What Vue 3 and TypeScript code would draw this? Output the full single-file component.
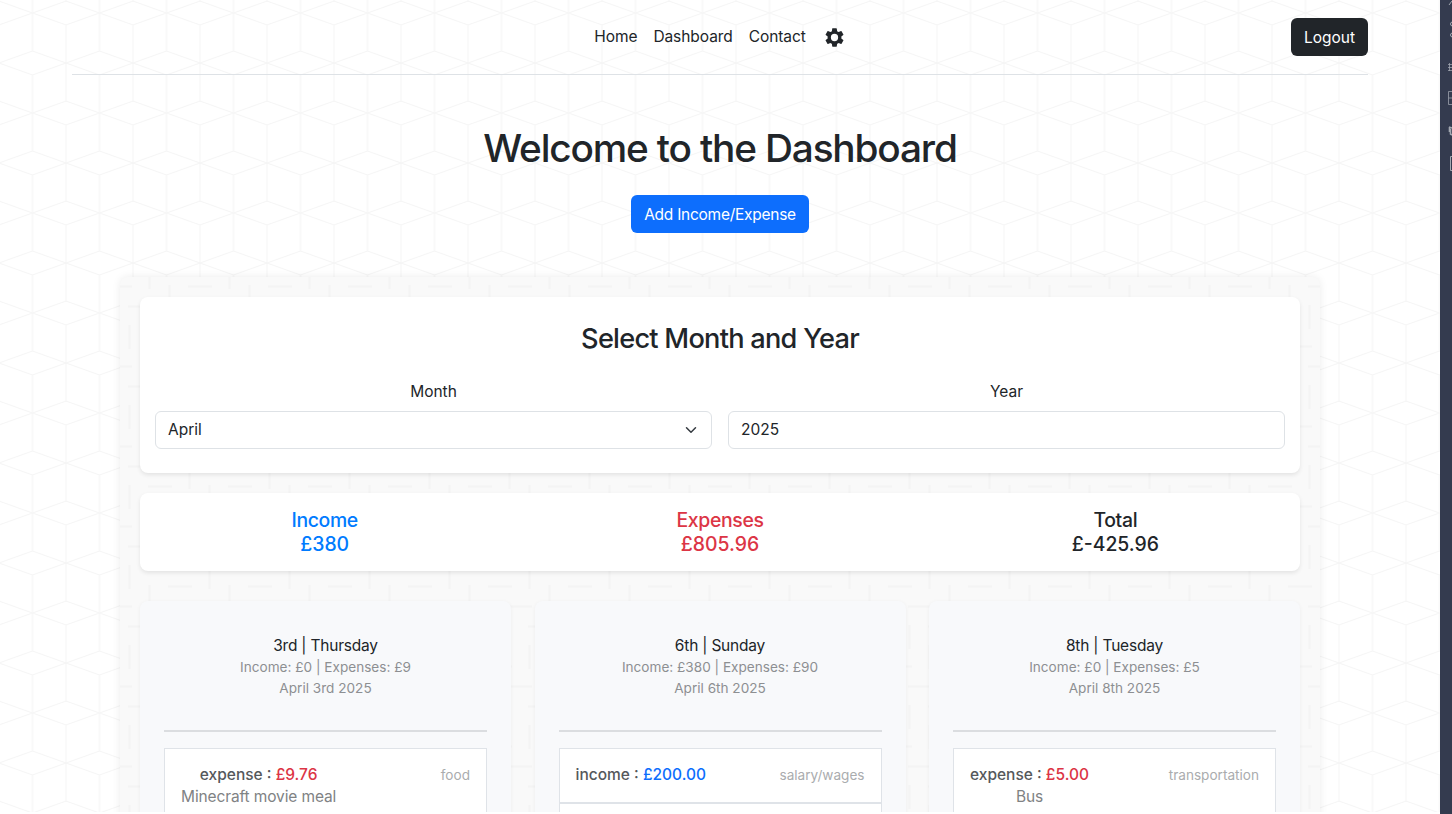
<script setup lang="ts">
interface Entry { kind: string; amount: string; tag: string; note?: string; income?: boolean }
interface Day { title: string; sums: string; date: string; entries: Entry[] }

const summary = [
  { label: 'Income', value: '£380', tone: 'blue' },
  { label: 'Expenses', value: '£805.96', tone: 'red' },
  { label: 'Total', value: '£-425.96', tone: 'dark' },
]

const days: Day[] = [
  {
    title: '3rd | Thursday', sums: 'Income: £0 | Expenses: £9', date: 'April 3rd 2025',
    entries: [{ kind: 'expense', amount: '£9.76', tag: 'food', note: 'Minecraft movie meal' }],
  },
  {
    title: '6th | Sunday', sums: 'Income: £380 | Expenses: £90', date: 'April 6th 2025',
    entries: [{ kind: 'income', amount: '£200.00', tag: 'salary/wages', income: true }],
  },
  {
    title: '8th | Tuesday', sums: 'Income: £0 | Expenses: £5', date: 'April 8th 2025',
    entries: [{ kind: 'expense', amount: '£5.00', tag: 'transportation', note: 'Bus' }],
  },
]
</script>

<template>
  <div class="screen">
    <div class="page">
      <svg class="cubes" width="1440" height="812">
        <defs>
          <pattern id="cube" x="32.5" y="-37" width="67" height="100" patternUnits="userSpaceOnUse">
            <g fill="none" stroke="#f5f5f5" stroke-width="1.1">
              <path d="M0 50L33.5 38L67 50L33.5 62ZM-33.5 0L0 -12L33.5 0L0 12ZM33.5 0L67 -12L100.5 0L67 12ZM-33.5 100L0 88L33.5 100L0 112ZM33.5 100L67 88L100.5 100L67 112Z" />
              <path d="M0 12V88M67 12V88M33.5 -38V38M33.5 62V138" />
            </g>
          </pattern>
        </defs>
        <rect width="1440" height="812" fill="url(#cube)" />
      </svg>

      <header class="header">
        <nav class="nav">
          <a>Home</a><a>Dashboard</a><a>Contact</a>
          <svg class="gear" viewBox="0 0 24 24"><path fill="#212529" d="M19.14 12.94c.04-.3.06-.61.06-.94s-.02-.64-.07-.94l2.03-1.58a.49.49 0 0 0 .12-.61l-1.92-3.32a.488.488 0 0 0-.59-.22l-2.39.96c-.5-.38-1.03-.7-1.62-.94L14.4 2.81a.484.484 0 0 0-.48-.41h-3.84c-.24 0-.43.17-.47.41L9.25 5.35c-.59.24-1.13.57-1.62.94L5.24 5.33a.47.47 0 0 0-.59.22L2.74 8.87c-.12.21-.08.47.12.61l2.03 1.58c-.05.3-.09.63-.09.94s.02.64.07.94l-2.03 1.58a.49.49 0 0 0-.12.61l1.92 3.32c.12.22.37.29.59.22l2.39-.96c.5.38 1.03.7 1.62.94l.36 2.54c.05.24.24.41.48.41h3.84c.24 0 .44-.17.47-.41l.36-2.54c.59-.24 1.13-.56 1.62-.94l2.39.96c.22.08.47 0 .59-.22l1.92-3.32a.47.47 0 0 0-.12-.61zM12 15.8A3.8 3.8 0 1 1 12 8.2a3.8 3.8 0 0 1 0 7.6z" /></svg>
        </nav>
        <button class="btn logout">Logout</button>
      </header>

      <h1>Welcome to the Dashboard</h1>
      <button class="btn add">Add Income/Expense</button>

      <main class="panel">
        <svg class="weave" width="1200" height="600">
          <defs>
            <pattern id="weave" width="80" height="80" patternUnits="userSpaceOnUse">
              <g fill="none" stroke="#f4f4f4" stroke-width="2">
                <path d="M-12 9.500H12M68 9.500H92M8 29.500H32M28 49.500H52M48 69.500H72" />
                <path d="M9.500 48V72M29.500 68V92M29.500 -12V12M49.500 8V32M69.500 28V52" />
              </g>
            </pattern>
          </defs>
          <rect width="1200" height="600" fill="url(#weave)" />
        </svg>

        <section class="card filter">
          <h2>Select Month and Year</h2>
          <div class="fields">
            <div class="field">
              <label>Month</label>
              <div class="control"><span>April</span>
                <svg class="chevron" viewBox="0 0 16 16"><path d="m2 5 6 6 6-6" fill="none" stroke="#343a40" stroke-width="2" stroke-linecap="round" stroke-linejoin="round" /></svg>
              </div>
            </div>
            <div class="field">
              <label>Year</label>
              <div class="control"><span>2025</span></div>
            </div>
          </div>
        </section>

        <section class="card summary">
          <div v-for="s in summary" :key="s.label" :class="['sum', s.tone]">
            <span class="sum-label">{{ s.label }}</span><span>{{ s.value }}</span>
          </div>
        </section>

        <section class="days">
          <article v-for="d in days" :key="d.title" class="day">
            <div class="day-title">{{ d.title }}</div>
            <div class="muted">{{ d.sums }}</div>
            <div class="muted">{{ d.date }}</div>
            <hr />
            <div class="entries">
              <div v-for="(e, i) in d.entries" :key="i" class="entry">
                <div class="what">
                  <div class="amount">{{ e.kind }} : <b :class="{ inc: e.income }">{{ e.amount }}</b></div>
                  <div v-if="e.note" class="note">{{ e.note }}</div>
                </div>
                <span class="tag">{{ e.tag }}</span>
              </div>
              <div class="entry"></div>
            </div>
          </article>
        </section>
      </main>
    </div>

    <aside class="rail">
      <svg width="12" height="190" fill="none" stroke="#a3a8b1" stroke-width="1">
        <path d="M9 5L12 1" />
        <circle cx="12.5" cy="24" r="2" /><circle cx="12.5" cy="35" r="2" />
        <path d="M8 64.500H12M8 70.500H12M9.500 63V71M8 67.500H12" stroke-opacity=".75" />
        <path d="M12 91.500H8.500V104.500H12M8.500 98H12" stroke-opacity=".75" />
        <path d="M9 127L12 128M10.500 129V134L12 135M9.500 127V132" stroke-width="1.600" />
        <path d="M12 156.500H10.500V170.500H12" />
      </svg>
    </aside>
  </div>
</template>

<style>
body { overflow: hidden; background: #fff; }
</style>

<style scoped>
* { box-sizing: border-box; }
.screen { width: 1452px; height: 814px; display: flex; overflow: hidden; background: #fff; font: 15.5px/24px Inter, "Liberation Sans", sans-serif; color: #212529; }
.page { position: relative; isolation: isolate; width: 1440px; height: 812px; overflow: hidden; display: flex; flex-direction: column; align-items: center; flex: none; }
.page > * { flex: none; }
.cubes { position: absolute; inset: 0; z-index: -1; }
.header { width: 1296px; height: 75px; border-bottom: 1px solid #dee2e6; display: grid; grid-template-columns: 1fr auto 1fr; align-items: start; padding-top: 18px; }
.nav { grid-column: 2; display: flex; gap: 16px; height: 38px; align-items: center; letter-spacing: -.07px; }
.gear { width: 23px; height: 23px; margin: 1px 0 0 1px; }
.btn { height: 38px; border: 0; border-radius: 6px; padding: 2px 0 0; font: inherit; color: #fff; white-space: nowrap; }
.logout { grid-column: 3; justify-self: end; width: 77px; background: #212529; }
h1 { margin: 49px 0 0; height: 48px; font-size: 38.8px; line-height: 48px; font-weight: 500; letter-spacing: -1.17px; white-space: nowrap; }
.add { margin-top: 23px; width: 178px; background: #0d6efd; letter-spacing: -.26px; }
.panel { position: relative; isolation: isolate; width: 1200px; margin-top: 44px; height: 600px; padding: 20px; border-radius: 8px 8px 0 0; background: #f9f9f9; box-shadow: 0 0 8px rgba(0,0,0,.08); }
.weave { position: absolute; inset: 0; z-index: -1; }
.card { background: #fff; border-radius: 8px; box-shadow: 0 2px 4px rgba(0,0,0,.09); }
.filter { height: 175.5px; padding: 25px 15px 0; text-align: center; }
h2 { margin: 0; font-size: 27.2px; line-height: 34px; font-weight: 500; letter-spacing: -.75px; }
.fields { display: flex; gap: 16px; margin-top: 23px; }
.field { flex: 1; }
.field label { display: block; height: 31.5px; line-height: 26px; }
.control { height: 38px; border: 1px solid #dee2e6; border-radius: 6px; display: flex; justify-content: space-between; align-items: center; padding: 1px 12px 0; }
.chevron { width: 16px; height: 12px; }
.summary { margin-top: 20px; height: 78px; padding: 15.5px 0 0; display: grid; grid-template-columns: repeat(3, 1fr); column-gap: 26px; font-size: 19.4px; font-weight: 500; }
.sum { display: flex; flex-direction: column; align-items: center; }
.sum-label { letter-spacing: -.33px; }
.blue { color: #007bff; }
.red { color: #dc3545; }
.days { display: grid; grid-template-columns: repeat(3, 371px); justify-content: space-between; margin-top: 30px; }
.day { height: 400px; padding: 33.5px 24px 0; border-radius: 8px; background: #f8f9fb; box-shadow: 0 1px 4px rgba(0,0,0,.05); text-align: center; }
.day-title { line-height: 23px; letter-spacing: -.2px; }
.muted { font-size: 13.6px; line-height: 21px; color: #8d8f92; }
hr { margin: 31px 0 16px; border: 0; height: 2px; background: #dbdde0; }
.entries { border: 1px solid #dfe3e8; background: #fff; }
.entry { min-height: 55px; padding: 14px 16px 0; display: flex; justify-content: space-between; border-bottom: 2px solid #dfe3e8; }
.amount { font-weight: 500; color: #55585b; }
.amount b { font-weight: 500; color: #dc3545; }
.amount b.inc { color: #0d6efd; }
.note { color: #808284; line-height: 19px; height: 41px; letter-spacing: -.12px; }
.tag { font-size: 13.6px; line-height: 25px; color: #aaacae; }
.rail { width: 12px; background: #343b4f; flex: none; }
</style>
